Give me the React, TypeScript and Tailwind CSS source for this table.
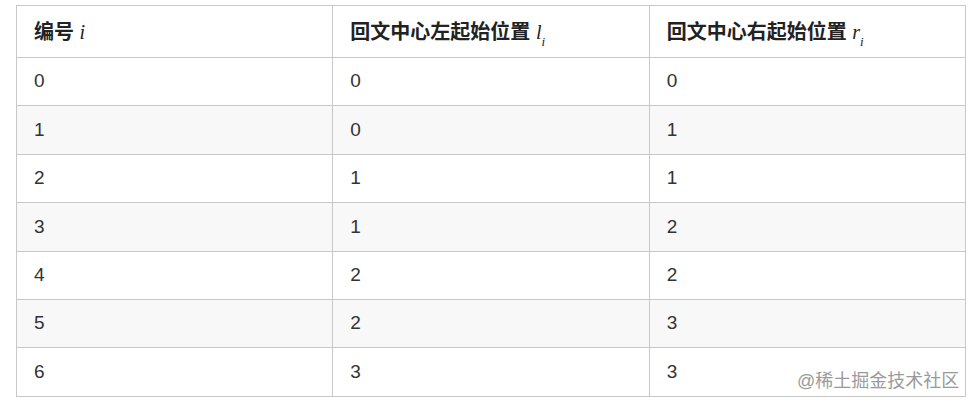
const rows: [number, number, number][] = [
  [0, 0, 0],
  [1, 0, 1],
  [2, 1, 1],
  [3, 1, 2],
  [4, 2, 2],
  [5, 2, 3],
  [6, 3, 3],
];

function Sym({ base, sub }: { base: string; sub?: string }) {
  return (
    <span className="font-['Liberation_Serif',serif] italic font-normal text-[20px]">
      {base}
      {sub && <sub className="text-[13px] align-[-4px]">{sub}</sub>}
    </span>
  );
}

export default function App() {
  const cell = "border border-[#c8c8c8] px-[17px] text-left align-middle";
  return (
    <div className="relative w-[974px] h-[413px] bg-white font-['Liberation_Sans','Noto_Sans_CJK_SC',sans-serif] text-[#333]">
      <div className="pt-[5px] pl-[16px]">
        <table className="w-[950px] table-fixed border-collapse text-[19px]">
          <thead>
            <tr className="h-[52px] text-[20px] text-[#222]">
              <th className={cell + " font-bold"}>
                编号 <Sym base="i" />
              </th>
              <th className={cell + " font-bold"}>
                回文中心左起始位置 <Sym base="l" sub="i" />
              </th>
              <th className={cell + " font-bold"}>
                回文中心右起始位置 <Sym base="r" sub="i" />
              </th>
            </tr>
          </thead>
          <tbody>
            {rows.map((r, i) => (
              <tr key={i} className={"h-[48.4px] " + (i % 2 === 1 ? "bg-[#f8f8f8]" : "bg-white")}>
                {r.map((v, j) => (
                  <td key={j} className={cell}>
                    {v}
                  </td>
                ))}
              </tr>
            ))}
          </tbody>
        </table>
      </div>
      <div className="absolute left-[797px] top-[369px] text-[18px] text-[#9a9a9a] leading-[24px]">
        @稀土掘金技术社区
      </div>
    </div>
  );
}
